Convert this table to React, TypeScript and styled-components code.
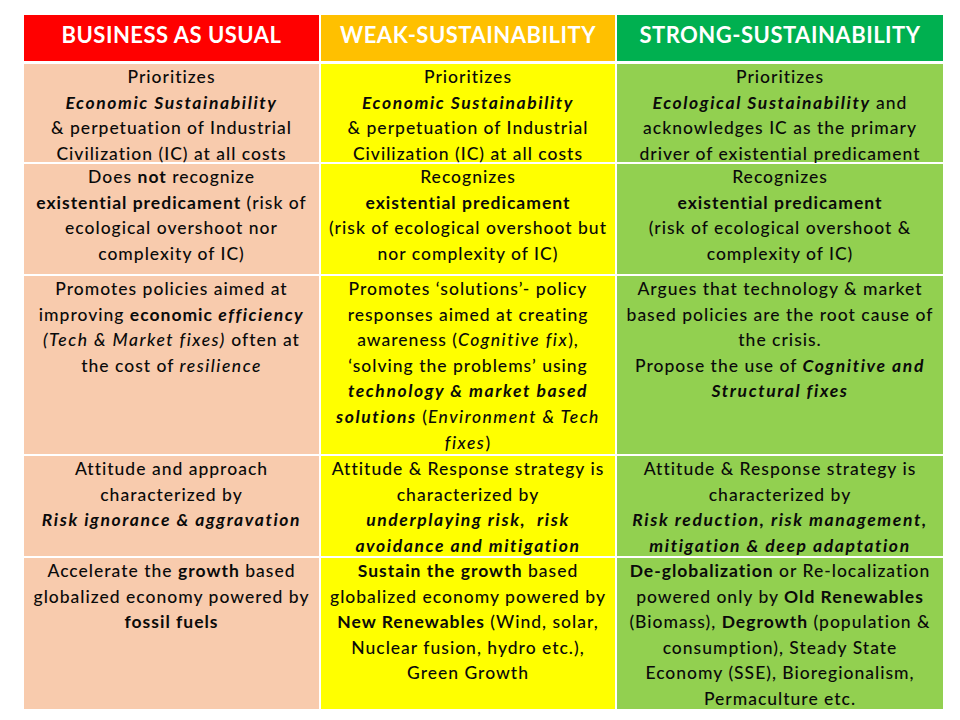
import React from "react";
import styled, { createGlobalStyle } from "styled-components";

const Global = createGlobalStyle`
  html, body { margin: 0; padding: 0; background: #ffffff; }
  body { font-family: Lato, "Open Sans", sans-serif; color: #000; }
`;

const Page = styled.div`
  width: 960px;
  height: 720px;
  padding: 15px 0 0 24px;
  box-sizing: border-box;
`;

const Table = styled.div`
  display: grid;
  grid-template-columns: 295px 294px 326px;
  grid-template-rows: 47px 98px 110px 178px 100px 151px;
  column-gap: 2px;
  row-gap: 2px;
  width: 919px;
`;

type Tone = "red" | "orange" | "green";
const headBg: Record<Tone, string> = {
  red: "#ff0000",
  orange: "#ffc000",
  green: "#00b050",
};

const Head = styled.div<{ $tone: Tone }>`
  background: ${(p) => headBg[p.$tone]};
  color: #ffffff;
  font-family: Lato, sans-serif;
  font-weight: 700;
  font-size: 22px;
  letter-spacing: 0.5px;
  display: flex;
  align-items: center;
  justify-content: center;
  padding-bottom: 7px;
  box-sizing: border-box;
  margin-bottom: 1px;
  white-space: nowrap;
`;

const bodyBg: Record<Tone, string> = {
  red: "#f8cbad",
  orange: "#ffff00",
  green: "#92d050",
};

const Cell = styled.div<{ $tone: Tone }>`
  background: ${(p) => bodyBg[p.$tone]};
  font-size: 17.5px;
  font-weight: 500;
  letter-spacing: 1px;
  line-height: 25.6px;
  text-align: center;
  padding-top: 0;
  color: #0a0a0a;
`;

const Line = styled.span`
  display: block;
  white-space: pre;
`;

const B = styled.b`
  font-weight: 700;
`;
const I = styled.i`
  font-style: italic;
  letter-spacing: 1.5px;
`;
const BI = styled.b`
  font-weight: 700;
  font-style: italic;
  letter-spacing: 1.6px;
`;

export default function App() {
  return (
    <>
      <Global />
      <Page>
        <Table>
          <Head $tone="red">BUSINESS AS USUAL</Head>
          <Head $tone="orange">WEAK-SUSTAINABILITY</Head>
          <Head $tone="green">STRONG-SUSTAINABILITY</Head>

          <Cell $tone="red">
            <Line>Prioritizes</Line>
            <Line><BI>Economic Sustainability</BI></Line>
            <Line>&amp; perpetuation of Industrial</Line>
            <Line>Civilization (IC) at all costs</Line>
          </Cell>
          <Cell $tone="orange">
            <Line>Prioritizes</Line>
            <Line><BI>Economic Sustainability</BI></Line>
            <Line>&amp; perpetuation of Industrial</Line>
            <Line>Civilization (IC) at all costs</Line>
          </Cell>
          <Cell $tone="green">
            <Line>Prioritizes</Line>
            <Line><BI>Ecological Sustainability</BI> and</Line>
            <Line>acknowledges IC as the primary</Line>
            <Line>driver of existential predicament</Line>
          </Cell>

          <Cell $tone="red">
            <Line>Does <B>not</B> recognize</Line>
            <Line><B>existential predicament</B> (risk of</Line>
            <Line>ecological overshoot nor</Line>
            <Line>complexity of IC)</Line>
          </Cell>
          <Cell $tone="orange">
            <Line>Recognizes</Line>
            <Line><B>existential predicament</B></Line>
            <Line>(risk of ecological overshoot but</Line>
            <Line>nor complexity of IC)</Line>
          </Cell>
          <Cell $tone="green">
            <Line>Recognizes</Line>
            <Line><B>existential predicament</B></Line>
            <Line>(risk of ecological overshoot &amp;</Line>
            <Line>complexity of IC)</Line>
          </Cell>

          <Cell $tone="red">
            <Line>Promotes policies aimed at</Line>
            <Line>improving <B>economic <I>efficiency</I></B></Line>
            <Line><I>(Tech &amp; Market fixes)</I> often at</Line>
            <Line>the cost of <I>resilience</I></Line>
          </Cell>
          <Cell $tone="orange">
            <Line>Promotes ‘solutions’- policy</Line>
            <Line>responses aimed at creating</Line>
            <Line>awareness (<I>Cognitive fix</I>),</Line>
            <Line>‘solving the problems’ using</Line>
            <Line><BI>technology &amp; market based</BI></Line>
            <Line><BI>solutions</BI> (<I>Environment &amp; Tech</I></Line>
            <Line><I>fixes</I>)</Line>
          </Cell>
          <Cell $tone="green">
            <Line>Argues that technology &amp; market</Line>
            <Line>based policies are the root cause of</Line>
            <Line>the crisis.</Line>
            <Line>Propose the use of <BI>Cognitive and</BI></Line>
            <Line><BI>Structural fixes</BI></Line>
          </Cell>

          <Cell $tone="red">
            <Line>Attitude and approach</Line>
            <Line>characterized by</Line>
            <Line><BI>Risk ignorance &amp; aggravation</BI></Line>
          </Cell>
          <Cell $tone="orange">
            <Line>Attitude &amp; Response strategy is</Line>
            <Line>characterized by</Line>
            <Line><BI>underplaying risk,  risk</BI></Line>
            <Line><BI>avoidance and mitigation</BI></Line>
          </Cell>
          <Cell $tone="green">
            <Line>Attitude &amp; Response strategy is</Line>
            <Line>characterized by</Line>
            <Line><BI>Risk reduction, risk management,</BI></Line>
            <Line><BI>mitigation &amp; deep adaptation</BI></Line>
          </Cell>

          <Cell $tone="red">
            <Line>Accelerate the <B>growth</B> based</Line>
            <Line>globalized economy powered by</Line>
            <Line><B>fossil fuels</B></Line>
          </Cell>
          <Cell $tone="orange">
            <Line><B>Sustain the growth</B> based</Line>
            <Line>globalized economy powered by</Line>
            <Line><B>New Renewables</B> (Wind, solar,</Line>
            <Line>Nuclear fusion, hydro etc.),</Line>
            <Line>Green Growth</Line>
          </Cell>
          <Cell $tone="green">
            <Line><B>De-globalization</B> or Re-localization</Line>
            <Line>powered only by <B>Old Renewables</B></Line>
            <Line>(Biomass), <B>Degrowth</B> (population &amp;</Line>
            <Line>consumption), Steady State</Line>
            <Line>Economy (SSE), Bioregionalism,</Line>
            <Line>Permaculture etc.</Line>
          </Cell>
        </Table>
      </Page>
    </>
  );
}
